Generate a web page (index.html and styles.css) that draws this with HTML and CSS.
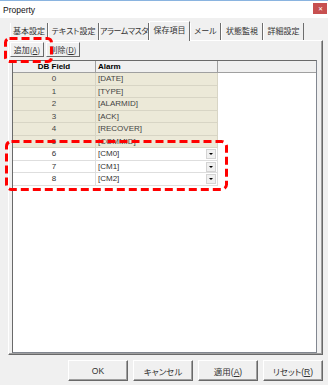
FILE: index.html
```html
<!DOCTYPE html>
<html lang="ja">
<head>
    <meta charset="UTF-8">
    <title>Property</title>
    <link rel="stylesheet" href="styles.css">
</head>
<body>
    <div class="window">
        <div class="titlebar">
            <span class="title">Property</span>
            <span class="close">&#x2715;</span>
        </div>

        <div class="tabs">
            <div class="tab t1">基本設定</div>
            <div class="tab t2">テキスト設定</div>
            <div class="tab t3">アラームマスタ</div>
            <div class="tab t4 active">保存項目</div>
            <div class="tab t5">メール</div>
            <div class="tab t6">状態監視</div>
            <div class="tab t7">詳細設定</div>
        </div>

        <div class="panel">
            <div class="toolbar">
                <button class="tool">追加(<u>A</u>)</button>
                <button class="tool">削除(<u>D</u>)</button>
            </div>

            <div class="grid">
                <div class="row head">
                    <div class="c1">DB Field</div>
                    <div class="c2">Alarm</div>
                    <div class="c3"></div>
                </div>
                <div class="row ro"><div class="c1">0</div><div class="c2">[DATE]</div><div class="c3"></div></div>
                <div class="row ro"><div class="c1">1</div><div class="c2">[TYPE]</div><div class="c3"></div></div>
                <div class="row ro"><div class="c1">2</div><div class="c2">[ALARMID]</div><div class="c3"></div></div>
                <div class="row ro"><div class="c1">3</div><div class="c2">[ACK]</div><div class="c3"></div></div>
                <div class="row ro"><div class="c1">4</div><div class="c2">[RECOVER]</div><div class="c3"></div></div>
                <div class="row ro"><div class="c1">5</div><div class="c2">[COMMID]</div><div class="c3"></div></div>
                <div class="row ed"><div class="c1">6</div><div class="c2"><span>[CM0]</span><span class="drop"></span></div><div class="c3"></div></div>
                <div class="row ed"><div class="c1">7</div><div class="c2"><span>[CM1]</span><span class="drop"></span></div><div class="c3"></div></div>
                <div class="row ed"><div class="c1">8</div><div class="c2"><span>[CM2]</span><span class="drop"></span></div><div class="c3"></div></div>
            </div>
        </div>

        <div class="footer">
            <button class="btn">OK</button>
            <button class="btn">キャンセル</button>
            <button class="btn">適用(<u>A</u>)</button>
            <button class="btn">リセット(<u>R</u>)</button>
        </div>

        <!-- red highlight marks -->
        <svg class="mark mark-add" width="50" height="27">
            <rect x="1.5" y="1.5" width="46" height="23" rx="4" />
        </svg>
        <svg class="mark mark-rows" width="224" height="52">
            <rect x="1.5" y="1.5" width="220" height="48" rx="5" />
        </svg>
    </div>
</body>
</html>
```

FILE: styles.css
```css
body {
    margin: 0;
}

.window {
    position: relative;
    width: 328px;
    height: 385px;
    box-sizing: border-box;
    background-color: #f0f0f0;
    border-top: 1px solid #8ab4e0;
    font-family: "Liberation Sans", "Noto Sans CJK JP", sans-serif;
    font-size: 8px;
    color: #000;
    overflow: hidden;
}

.titlebar {
    height: 17px;
    background-color: #fff;
    display: flex;
    align-items: center;
    justify-content: space-between;
    padding-left: 3px;
}

.title {
    font-size: 8.5px;
    color: #111;
}

.close {
    width: 14px;
    height: 11px;
    margin-right: 1px;
    margin-top: -2px;
    background-color: #c75050;
    color: #fff;
    font-size: 6px;
    display: flex;
    align-items: center;
    justify-content: center;
}

/* tabs */
.tabs {
    height: 22px;
    display: flex;
    align-items: flex-end;
    padding-left: 10px;
    font-family: "Noto Sans CJK JP", sans-serif;
    font-feature-settings: "palt";
}

.tab {
    height: 17px;
    line-height: 16px;
    box-sizing: border-box;
    text-align: center;
    font-size: 8px;
    color: #333;
    border-left: 1px solid #fff;
    border-right: 1px solid #6d6d6d;
    white-space: nowrap;
}

.t1 { width: 38px; }
.t2 { width: 51px; }
.t3 { width: 50px; letter-spacing: -0.4px; }
.t4 { width: 41px; }
.t5 { width: 31px; }
.t6 { width: 42px; }
.t7 { width: 41px; }

.tab.active {
    height: 20px;
    line-height: 15px;
    margin-bottom: -1px;
    background-color: #f0f0f0;
    border-top: 1px solid #fff;
    position: relative;
    z-index: 1;
}

/* page */
.panel {
    margin-left: 8px;
    width: 315px;
    height: 315px;
    box-sizing: border-box;
    border: 1px solid;
    border-color: #fff #696969 #696969 #fff;
    box-shadow: inset -1px -1px 0 #a0a0a0;
}

.toolbar {
    height: 19px;
    display: flex;
    gap: 2px;
    padding: 1px 0 0 1px;
    box-sizing: border-box;
}

.tool {
    width: 34px;
    height: 15px;
    padding: 0;
    box-sizing: border-box;
    background-color: #f0f0f0;
    border: 1px solid;
    border-color: #fff #696969 #696969 #fff;
    font-family: "Noto Sans CJK JP", sans-serif;
    font-size: 8px;
    line-height: 12px;
    color: #333;
}

.grid {
    margin-left: 3px;
    width: 305px;
    height: 293px;
    box-sizing: border-box;
    background-color: #fff;
    border: 1px solid #828790;
    border-left-color: #6a6a6a;
    border-top-color: #6a6a6a;
}

.row {
    display: grid;
    grid-template-columns: 83px 122px 1fr;
    height: 12px;
    line-height: 11px;
}

.row:nth-child(even) {
    height: 13px;
    line-height: 12px;
}

.row > div {
    box-sizing: border-box;
    white-space: nowrap;
}

.c1 {
    text-align: center;
}

.c2 {
    padding-left: 2px;
}

.head {
    background-color: #f0f0f0;
    font-weight: bold;
}

.head > div {
    border-bottom: 1px solid #a0a0a0;
}

.head .c1, .head .c2 {
    border-right: 1px solid #a0a0a0;
}

.ro .c1, .ro .c2 {
    background-color: #ece9d8;
    border-right: 1px solid #d8d5c5;
    border-bottom: 1px solid #d8d5c5;
    color: #444;
}

.ed .c1, .ed .c2 {
    border-right: 1px solid #dedede;
    border-bottom: 1px solid #dedede;
    color: #333;
}

.ed .c2 {
    display: flex;
    align-items: center;
    justify-content: space-between;
    padding-right: 1px;
}

.drop {
    width: 10px;
    height: 10px;
    box-sizing: border-box;
    background-color: #f0f0f0;
    border: 1px solid #d4d4d4;
    display: flex;
    align-items: center;
    justify-content: center;
}

.drop::after {
    content: "";
    border-left: 2px solid transparent;
    border-right: 2px solid transparent;
    border-top: 2px solid #000;
}

/* dialog buttons */
.footer {
    display: flex;
    justify-content: flex-end;
    gap: 5px;
    padding-right: 5px;
    margin-top: 5px;
}

.btn {
    width: 60px;
    height: 21px;
    padding: 0;
    box-sizing: border-box;
    background-color: #f0f0f0;
    border: 1px solid;
    border-color: #fff #696969 #696969 #fff;
    box-shadow: inset -1px -1px 0 #a0a0a0;
    font-family: "Liberation Sans", "Noto Sans CJK JP", sans-serif;
    font-feature-settings: "palt";
    font-size: 8.5px;
    color: #333;
}

/* red dashed highlights */
.mark {
    position: absolute;
    fill: none;
    stroke: #f00;
    stroke-width: 3;
    stroke-dasharray: 8 4;
}

.mark-add {
    left: 4px;
    top: 36px;
}

.mark-rows {
    left: 5px;
    top: 139px;
}
```
